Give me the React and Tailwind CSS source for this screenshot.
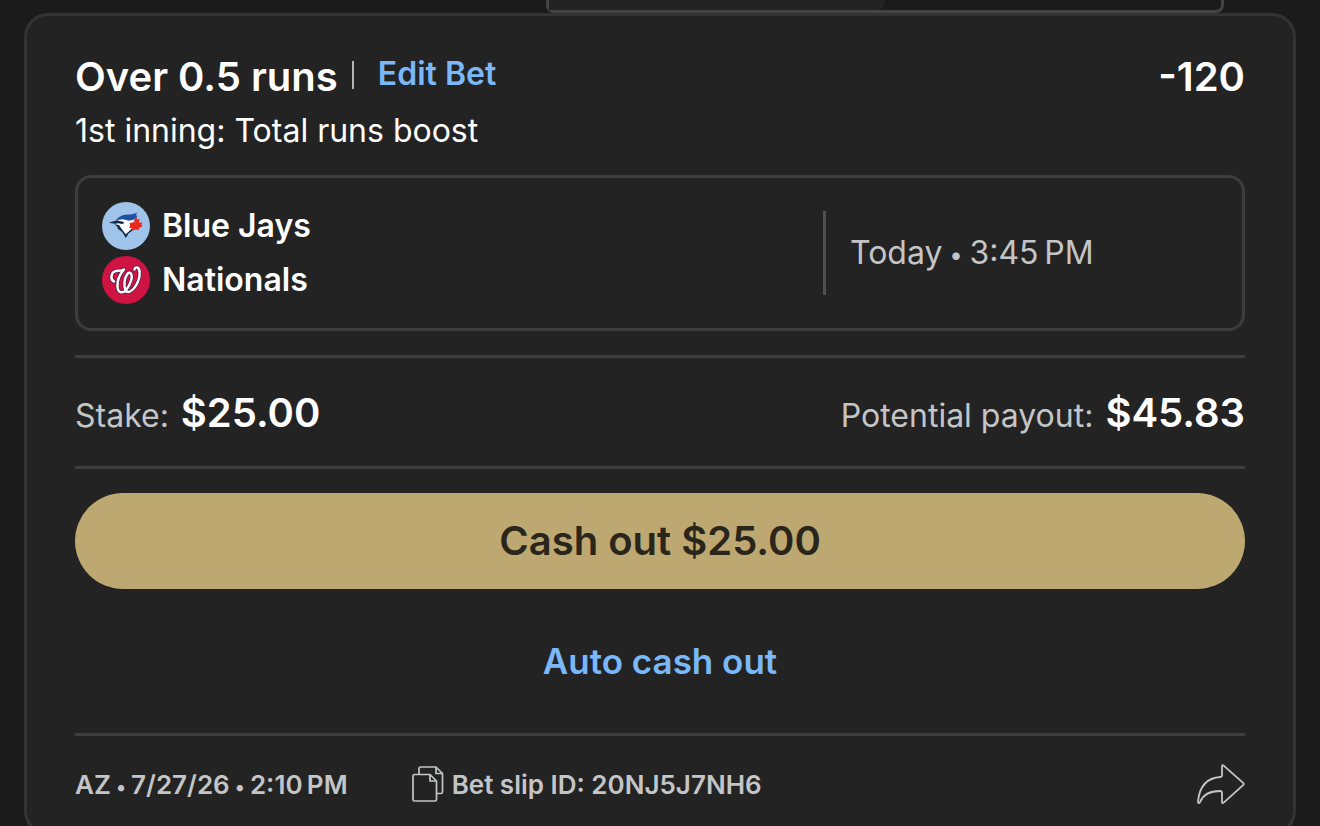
const TEAMS = [
  { name: 'Blue Jays', Logo: BlueJaysLogo },
  { name: 'Nationals', Logo: NationalsLogo },
];

function BlueJaysLogo() {
  return (
    <svg viewBox="0 0 48 48" className="size-12 shrink-0" aria-hidden="true">
      <circle cx="24" cy="24" r="24" fill="#9fc3e9" />
      <path d="M15 18.500c3-3 7-4.500 11-4.700l9.500-2.500-4 6.500-1 9-6.500 8-4-6-6-6.500z" fill="#fff" />
      <path d="M14 18.500c2-3.500 6.500-5.600 11-5.900 4.500-.3 8-1 10.500-2.200l-1.700 3 1.900.2c-1.700 3-4.200 4.600-7.700 5l-3.500.2c-3.300-1.800-6.500-1.800-10.500-.3z" fill="#1d4fa3" />
      <path d="M17.500 18.300c3.500-1.500 7-1 9.500 1.200l-2.500-.2c-2.500-.9-4.500-.9-7-1z" fill="#fff" />
      <path d="M6.800 20.800l8.200-2.500 2.500.8 3.500.6 1.500 1.300-2.500.9-3.500-.6-3.500.4z" fill="#12284b" />
      <path d="M12.500 22.200l4.500.8 2.500 3.800 4.200 5.500 5.800-5.300 1.500 1-4.500 3.500-2.600 4.500-3.700-6-4-3-1-.6 1-.6z" fill="#12284b" />
      <path d="M34 14.800l1.700 3 1.800-1-.3 4 3.300-.2-1.300 2 1.600 1.200-4 2.700.4 1.500-3.900-.5-2.600 1.300-1.600-2.700-2.300-.4 1.400-1.800-.6-3.300 2.400.4.600-1.300 1.700 1.400.3-4.200z" fill="#e8291c" />
    </svg>
  );
}

function NationalsLogo() {
  const w = 'M12 25.500C8.500 24 8.500 17.500 12.500 15.500C15 14.200 19.500 15.500 22 13.500C18 18 15 25 15.500 31C16 37.500 21.500 37.500 24.500 33.500C28.500 28 31 21 29 17.500C26.500 14.500 23 20 22.500 26.500C22 33 24 37.500 28 35.500C33.500 32.500 38.500 23 37.500 15.500C37 10.500 33 10.500 32.500 13.500';
  return (
    <svg viewBox="0 0 48 48" className="size-12 shrink-0" fill="none" strokeLinecap="round" strokeLinejoin="round" aria-hidden="true">
      <circle cx="24" cy="24" r="24" fill="#cf1342" />
      <path d={w} stroke="#4a1d46" strokeWidth="3.800" />
      <path d={w} stroke="#fff" strokeWidth="2.500" />
    </svg>
  );
}

function CopyIcon() {
  return (
    <svg viewBox="0 0 32 36" className="h-9 w-8" fill="none" stroke="currentColor" strokeWidth="1.700" strokeLinejoin="round" aria-hidden="true">
      <path d="M7 8V2.500a1.500 1.500 0 0 1 1.500-1.500H24L30.500 7.500v18.500a1.500 1.500 0 0 1-1.500 1.500h-4" />
      <path d="M24 1v6.500h6.500" />
      <path d="M2.500 8.500H18L24.500 15v18.500a1.500 1.500 0 0 1-1.500 1.500H2.500A1.500 1.500 0 0 1 1 33.500V10a1.500 1.500 0 0 1 1.500-1.500z" />
      <path d="M18 8.500V15h6.500" />
    </svg>
  );
}

function ShareIcon() {
  return (
    <svg viewBox="0 0 48 40" className="h-10 w-12" fill="none" stroke="currentColor" strokeWidth="1.800" strokeLinejoin="round" aria-hidden="true">
      <path d="M25 2.200Q25 .3 26.700 1.600L46.400 19.200Q47.300 20 46.400 20.800L26.700 38.600Q25 39.800 25 38V29Q25 27 23 27C12 27 6 31 3.200 37.800Q2.500 39.400 1.500 39Q.9 38.700 1 37.500C2.500 22 10 13.800 23.500 13Q25 13 25 11.500z" />
    </svg>
  );
}

function Divider() {
  return <hr className="border-t-3 border-[#3d3d3d]" />;
}

export default function App() {
  return (
    <div className="h-screen overflow-hidden bg-[#1b1b1b] px-6 font-['Inter','Liberation_Sans',sans-serif] text-white">
      {/* Bottom edge of the tab switcher above the card */}
      <div className="mr-[72px] ml-auto flex h-[13px] w-[678px] rounded-b-lg border-3 border-t-0 border-[#444]">
        <div className="w-1/2 rounded-br-lg bg-[#232323]" />
      </div>

      <article className="rounded-3xl border-3 border-[#333] bg-[#232323] px-12">
        <header className="flex items-start justify-between pt-[37px]">
          <div className="flex items-center">
            <h2 className="text-[40px] leading-12 font-semibold">Over 0.5 runs</h2>
            <span className="mr-6 mb-1 ml-3.5 h-7 w-0.5 bg-[#b5b5b5]" />
            <button type="button" className="mb-1.5 text-[32px] leading-10 font-semibold text-[#7ab8f9]">Edit Bet</button>
          </div>
          <span className="text-[40px] leading-12 font-semibold">-120</span>
        </header>
        <p className="mt-2.5 text-[32px] leading-10">1st inning: Total runs boost</p>

        <section className="mt-6 flex items-center rounded-2xl border-3 border-[#3d3d3d] py-6">
          <ul className="flex flex-1 flex-col gap-1.5 pl-6">
            {TEAMS.map(({ name, Logo }) => (
              <li key={name} className="flex items-center gap-3 text-[32px] leading-10 font-semibold">
                <Logo />
                {name}
              </li>
            ))}
          </ul>
          <div className="flex h-[84px] w-[36%] items-center border-l-3 border-[#505050] pl-6 text-[32px] text-[#c4c5c7]">
            <span>Today<span className="align-middle text-[24px]"> • </span>3:45{'\u202f'}PM</span>
          </div>
        </section>

        <div className="mt-6">
          <Divider />
        </div>
        <dl className="flex h-27 items-center justify-between pt-0.5 text-[#c4c5c7]">
          <div className="flex items-baseline gap-3">
            <dt className="text-[32px]">Stake:</dt>
            <dd className="text-[40px] font-semibold text-white">$25.00</dd>
          </div>
          <div className="flex items-baseline gap-3">
            <dt className="text-[32px]">Potential payout:</dt>
            <dd className="text-[40px] font-semibold text-white">$45.83</dd>
          </div>
        </dl>
        <Divider />

        <div className="my-6 flex flex-col gap-6">
          <button type="button" className="h-24 rounded-full bg-[#bea871] text-[40px] font-semibold text-[#2a261b]">
            Cash out $25.00
          </button>
          <button type="button" className="h-24 rounded-full text-[35px] font-semibold text-[#7ab8f9]">
            Auto cash out
          </button>
        </div>
        <Divider />

        <footer className="flex h-24 items-center text-[26px] font-semibold text-[#c4c5c7]">
          <span>
            AZ<span className="align-middle text-[20px]"> • </span>7/27/26<span className="align-middle text-[20px]"> • </span>2:10{'\u202f'}PM
          </span>
          <button type="button" className="ml-16 flex items-center gap-2">
            <CopyIcon />
            Bet slip ID: 20NJ5J7NH6
          </button>
          <button type="button" aria-label="Share bet" className="ml-auto">
            <ShareIcon />
          </button>
        </footer>
      </article>
    </div>
  );
}
